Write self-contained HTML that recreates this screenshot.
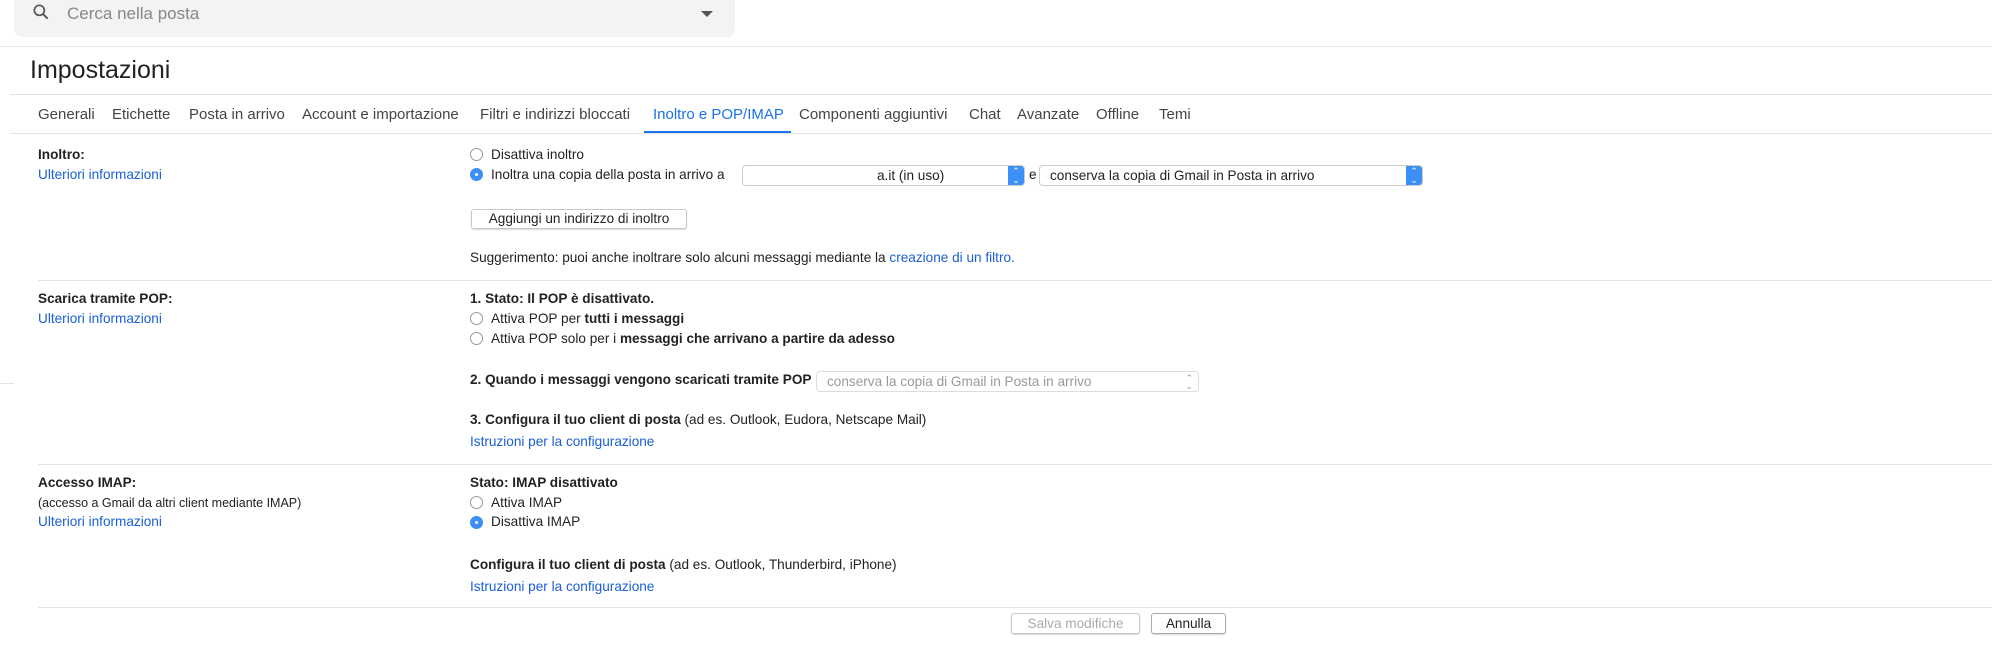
<!DOCTYPE html>
<html><head><meta charset="utf-8"><style>
*{margin:0;padding:0;box-sizing:border-box}
body{width:1992px;height:655px;background:#fff;font-family:"Liberation Sans",Arial,sans-serif;font-size:13.6px;color:#222;position:relative;overflow:hidden}
.a{position:absolute;white-space:nowrap}
.hr{position:absolute;height:1px;background:#e3e3e3;right:0}
.lnk{color:#1a5fd6}
b{font-weight:bold}
.tab{position:absolute;top:106px;font-size:15px;color:#444}
.r{position:absolute;width:13px;height:13px;border:1px solid #999;border-radius:50%;background:#fff}
.r.on{background:#3b8ff5;border-color:#3b8ff5}
.r.on:after{content:"";position:absolute;left:4px;top:4px;width:3px;height:3px;border-radius:50%;background:#fff}
.sel{position:absolute;border:1px solid #ccc;border-radius:4px;background:#fff;height:21px;font-size:13.6px;line-height:19px;padding-left:10px}
.arr{position:absolute;right:0;top:0;bottom:0;width:16px;background:#3b8ff5;border-radius:0 3px 3px 0;color:#fff;font-size:9px;line-height:9px;text-align:center;padding-top:1px}
.btn{position:absolute;border:1px solid #c8c8c8;border-radius:3px;background:#fff;box-shadow:0 1px 1px rgba(0,0,0,.15);text-align:center;font-size:13.6px}
</style></head><body>
<div class="a" style="left:14px;top:0;width:721px;height:37px;background:#f1f3f4;border-radius:0 0 8px 8px"></div>
<svg class="a" style="left:31px;top:2px" width="20" height="20" viewBox="0 0 24 24"><circle cx="10" cy="10" r="6" fill="none" stroke="#555" stroke-width="2"/><path d="M14.5 14.5L20 20" stroke="#555" stroke-width="2.2"/></svg>
<div class="a" style="left:67px;top:4px;font-size:17px;color:#888">Cerca nella posta</div>
<div class="a" style="left:701px;top:11px;width:0;height:0;border-left:6px solid transparent;border-right:6px solid transparent;border-top:6px solid #555"></div>
<div class="hr" style="left:0;top:46px;background:#ececec"></div>
<div class="a" style="left:30px;top:56px;font-size:25px;color:#222">Impostazioni</div>
<div class="hr" style="left:10px;top:94px"></div>
<div class="tab" style="left:38px">Generali</div>
<div class="tab" style="left:112px">Etichette</div>
<div class="tab" style="left:189px">Posta in arrivo</div>
<div class="tab" style="left:302px">Account e importazione</div>
<div class="tab" style="left:480px">Filtri e indirizzi bloccati</div>
<div class="tab" style="left:653px;color:#1a73e8">Inoltro e POP/IMAP</div>
<div class="tab" style="left:799px">Componenti aggiuntivi</div>
<div class="tab" style="left:969px">Chat</div>
<div class="tab" style="left:1017px">Avanzate</div>
<div class="tab" style="left:1096px">Offline</div>
<div class="tab" style="left:1159px">Temi</div>
<div class="a" style="left:644px;top:131px;width:147px;height:3px;background:#1a73e8"></div>
<div class="hr" style="left:10px;top:133px"></div>

<div class="a" style="left:38px;top:147px"><b>Inoltro:</b></div>
<div class="a lnk" style="left:38px;top:167px">Ulteriori informazioni</div>
<div class="r" style="left:470px;top:148px"></div>
<div class="a" style="left:491px;top:147px">Disattiva inoltro</div>
<div class="r on" style="left:470px;top:168px"></div>
<div class="a" style="left:491px;top:167px">Inoltra una copia della posta in arrivo a</div>
<div class="sel" style="left:742px;top:165px;width:283px;padding-left:134px">a.it (in uso)<div class="arr">⌃<br>⌄</div></div>
<div class="a" style="left:1029px;top:167px">e</div>
<div class="sel" style="left:1039px;top:165px;width:384px">conserva la copia di Gmail in Posta in arrivo<div class="arr">⌃<br>⌄</div></div>
<div class="btn" style="left:471px;top:209px;width:216px;height:20px;line-height:18px">Aggiungi un indirizzo di inoltro</div>
<div class="a" style="left:470px;top:250px">Suggerimento: puoi anche inoltrare solo alcuni messaggi mediante la <span class="lnk">creazione di un filtro.</span></div>
<div class="hr" style="left:38px;top:280px"></div>

<div class="a" style="left:38px;top:291px"><b>Scarica tramite POP:</b></div>
<div class="a lnk" style="left:38px;top:311px">Ulteriori informazioni</div>
<div class="a" style="left:470px;top:291px"><b>1. Stato: Il POP è disattivato.</b></div>
<div class="r" style="left:470px;top:312px"></div>
<div class="a" style="left:491px;top:311px">Attiva POP per <b>tutti i messaggi</b></div>
<div class="r" style="left:470px;top:332px"></div>
<div class="a" style="left:491px;top:331px">Attiva POP solo per i <b>messaggi che arrivano a partire da adesso</b></div>
<div class="a" style="left:0;top:383px;width:14px;height:1px;background:#e3e3e3"></div>
<div class="a" style="left:470px;top:372px"><b>2. Quando i messaggi vengono scaricati tramite POP</b></div>
<div class="sel" style="left:816px;top:371px;width:383px;color:#999;border-color:#ddd">conserva la copia di Gmail in Posta in arrivo<span style="position:absolute;right:5px;top:0;font-size:9px;line-height:8px;color:#999;padding-top:2px">⌃<br>⌄</span></div>
<div class="a" style="left:470px;top:412px"><b>3. Configura il tuo client di posta</b> (ad es. Outlook, Eudora, Netscape Mail)</div>
<div class="a lnk" style="left:470px;top:434px">Istruzioni per la configurazione</div>
<div class="hr" style="left:38px;top:464px"></div>

<div class="a" style="left:38px;top:475px"><b>Accesso IMAP:</b></div>
<div class="a" style="left:38px;top:496px;font-size:12.5px">(accesso a Gmail da altri client mediante IMAP)</div>
<div class="a lnk" style="left:38px;top:514px">Ulteriori informazioni</div>
<div class="a" style="left:470px;top:475px"><b>Stato: IMAP disattivato</b></div>
<div class="r" style="left:470px;top:496px"></div>
<div class="a" style="left:491px;top:495px">Attiva IMAP</div>
<div class="r on" style="left:470px;top:516px"></div>
<div class="a" style="left:491px;top:514px">Disattiva IMAP</div>
<div class="a" style="left:470px;top:557px"><b>Configura il tuo client di posta</b> (ad es. Outlook, Thunderbird, iPhone)</div>
<div class="a lnk" style="left:470px;top:579px">Istruzioni per la configurazione</div>
<div class="hr" style="left:38px;top:607px"></div>
<div class="btn" style="left:1011px;top:613px;width:129px;height:21px;line-height:19px;color:#aaa">Salva modifiche</div>
<div class="btn" style="left:1151px;top:613px;width:75px;height:21px;line-height:19px;border-color:#aaa">Annulla</div>
</body></html>
